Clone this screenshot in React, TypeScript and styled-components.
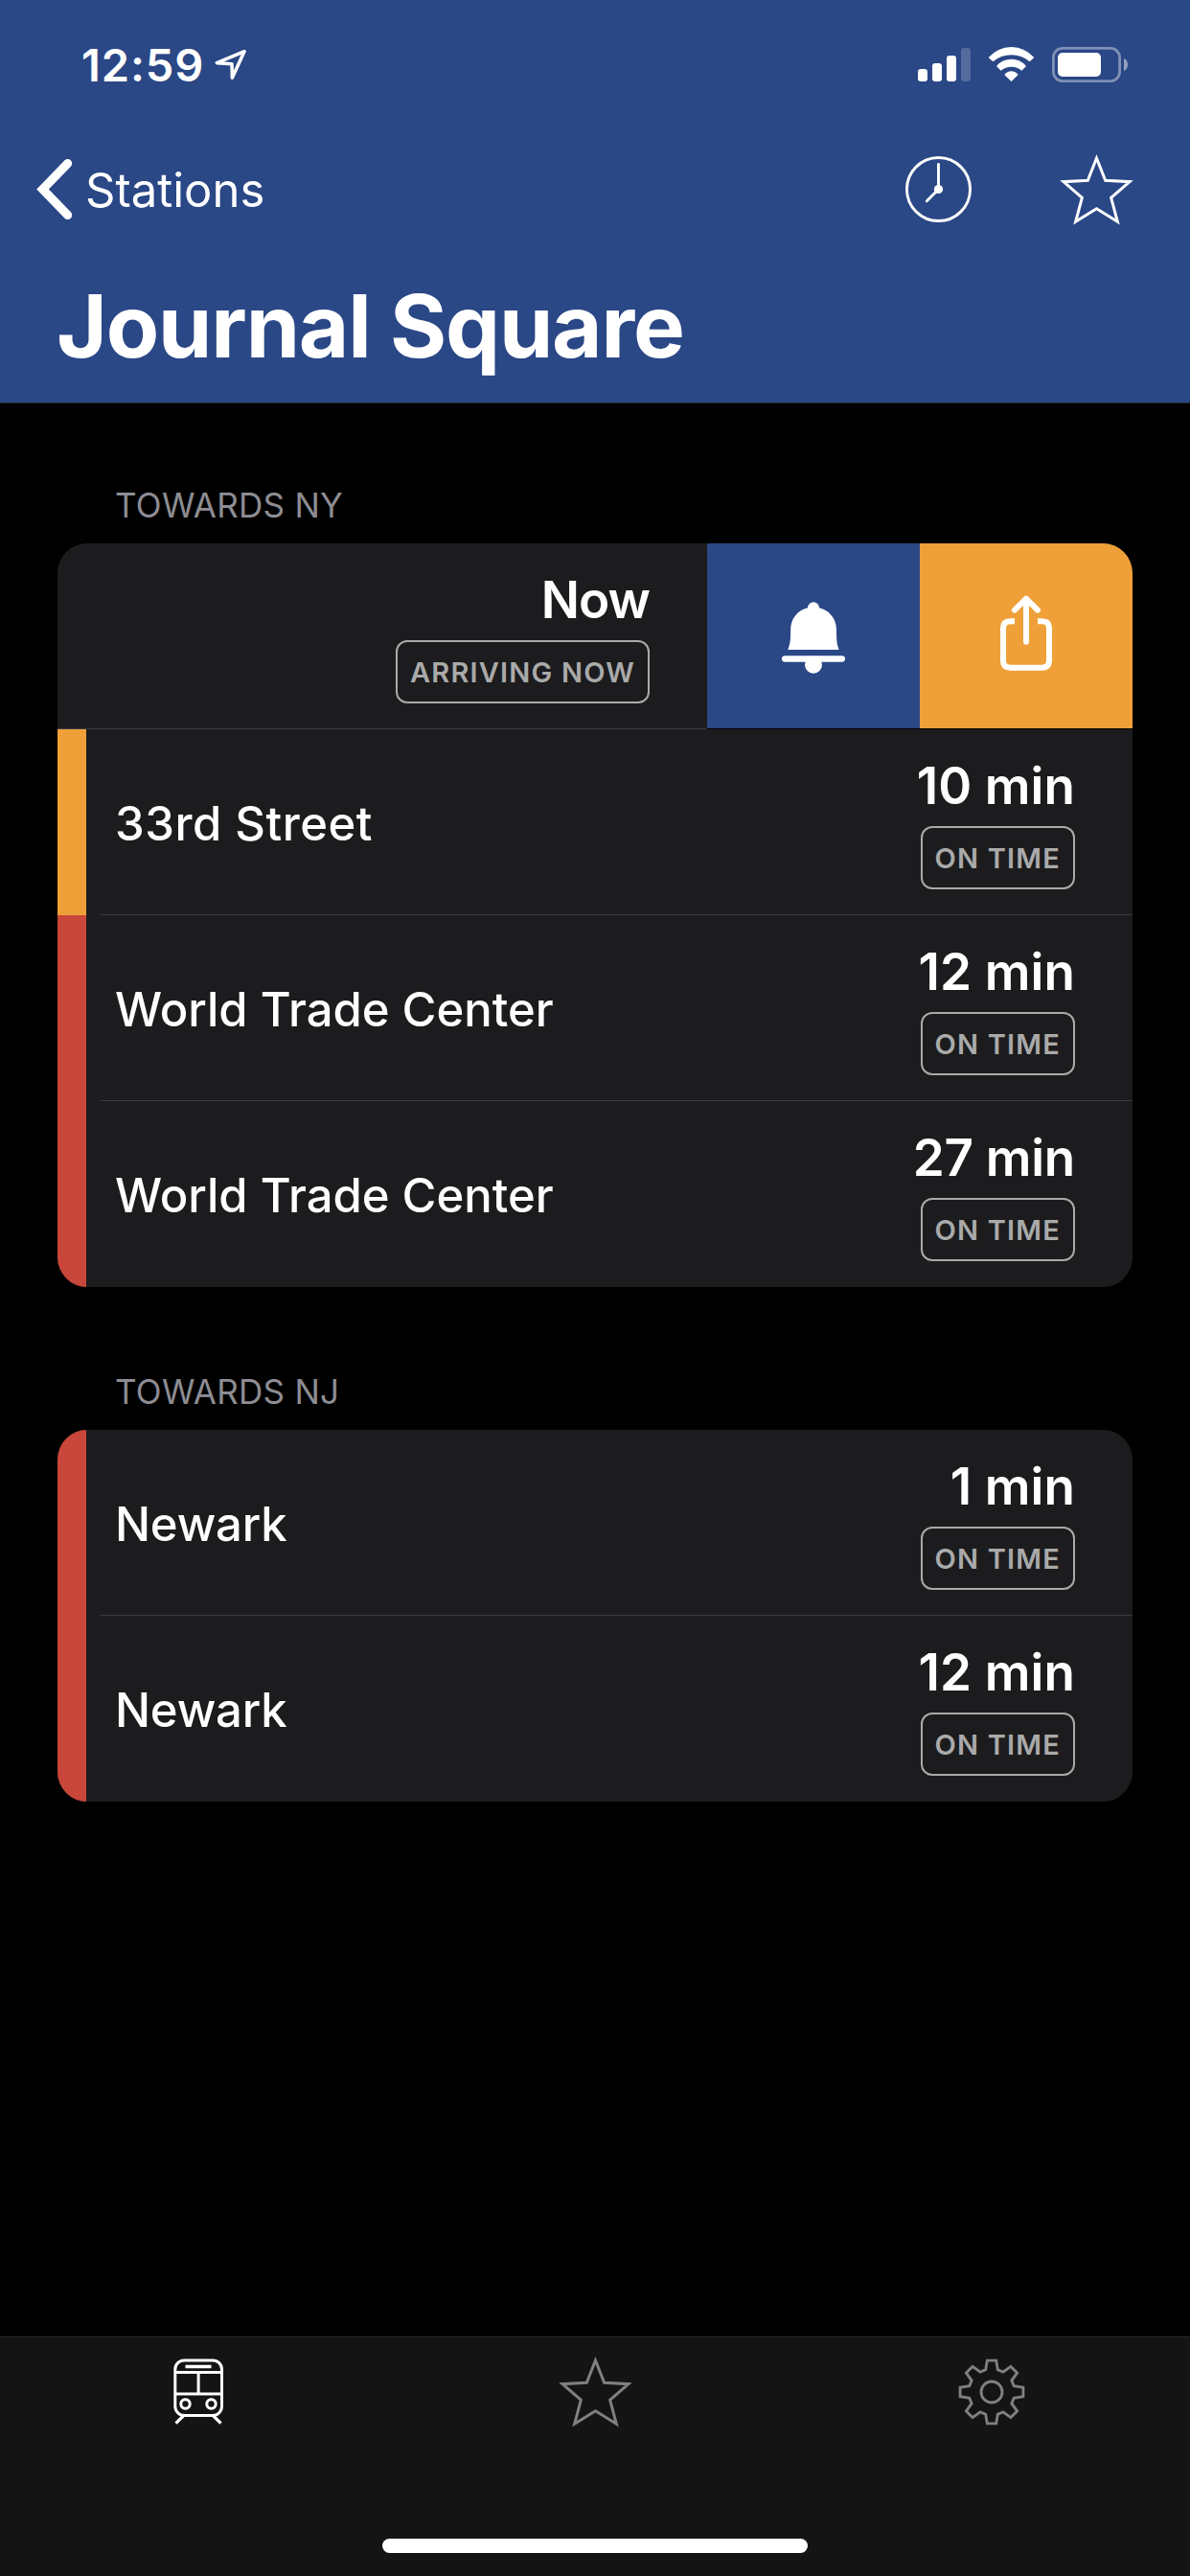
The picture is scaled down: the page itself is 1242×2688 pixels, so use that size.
import React from 'react';
import styled, { createGlobalStyle } from 'styled-components';

const color = {
  blue: '#2a4786',
  orange: '#f0a038',
  red: '#c8473a',
  card: '#1c1c1e',
  divider: '#3c3c3e',
  label: '#8d8d93',
  badge: '#aaaaaa',
  idle: '#808080',
};

const GlobalStyle = createGlobalStyle`
  * { box-sizing: border-box; }
  html, body { margin: 0; background: #000; }
  svg { display: block; flex: none; overflow: visible; }
`;

const Screen = styled.div`
  display: flex;
  flex-direction: column;
  width: 1242px;
  height: 2688px;
  background: #000;
  color: #fff;
  font-family: Inter, "Liberation Sans", sans-serif;
  overflow: hidden;
`;

const Header = styled.header`
  height: 421px;
  background: ${color.blue};
  border-bottom: 1px solid #262628;
`;

const StatusBar = styled.div`
  display: flex;
  align-items: flex-start;
  height: 132px;
  padding: 38px 65px 0 85px;
`;

const Clock = styled.span`
  font-size: 47px;
  font-weight: 600;
  line-height: 60px;
  letter-spacing: 0.9px;
  margin-right: 11px;
`;

const LocationSlot = styled.span`
  margin-top: 13px;
`;

const StatusIcons = styled.div`
  display: flex;
  gap: 18px;
  margin: 11px 0 0 auto;
`;

const NavBar = styled.nav`
  display: flex;
  align-items: center;
  height: 132px;
  padding: 0 60px 0 38px;
`;

const BackButton = styled.button`
  display: flex;
  align-items: center;
  gap: 13px;
  padding: 0;
  border: 0;
  background: none;
  color: inherit;
  font: 400 49px/61px Inter, "Liberation Sans", sans-serif;
`;

const NavActions = styled.div`
  display: flex;
  align-items: center;
  gap: 93px;
  margin: -1px 0 0 auto;
`;

const Title = styled.h1`
  margin: 0;
  padding: 21px 0 0 59px;
  font-size: 90.5px;
  font-weight: 700;
  line-height: 110px;
  letter-spacing: -1.15px;
`;

const Main = styled.main`
  flex: 1;
  padding: 84px 60px 0;
`;

const Section = styled.section`
  & + & { margin-top: 87px; }
`;

const SectionLabel = styled.h2`
  margin: 0 0 18px;
  padding-left: 60px;
  color: ${color.label};
  font-size: 35px;
  font-weight: 400;
  line-height: 44px;
  letter-spacing: 0.3px;
`;

const Card = styled.div`
  border-radius: 31px;
  background: ${color.card};
  overflow: hidden;
`;

const Row = styled.div`
  display: flex;
  height: 194px;
`;

const LineBar = styled.span<{ $line: string }>`
  width: 30px;
  background: ${(p) => p.$line};
`;

const RowBody = styled.div<{ $last: boolean }>`
  display: flex;
  flex: 1;
  justify-content: space-between;
  margin-left: 15px;
  padding: 0 60px 0 15px;
  border-bottom: 1px solid ${(p) => (p.$last ? 'transparent' : color.divider)};
`;

const Destination = styled.span<{ $tracking: number }>`
  align-self: center;
  padding-top: 5px;
  font-size: 49px;
  font-weight: 500;
  line-height: 60px;
  letter-spacing: ${(p) => p.$tracking}px;
`;

const Arrival = styled.div`
  display: flex;
  flex-direction: column;
  align-items: flex-end;
  gap: 12px;
  padding-top: 29px;
`;

const Minutes = styled.span<{ $tracking: number }>`
  font-size: 53px;
  font-weight: 600;
  line-height: 60px;
  letter-spacing: ${(p) => p.$tracking}px;
`;

const Badge = styled.span`
  height: 66px;
  padding: 0 13px;
  border: 2px solid ${color.badge};
  border-radius: 12px;
  color: ${color.badge};
  font-size: 29px;
  font-weight: 600;
  line-height: 63px;
  letter-spacing: 1.2px;
  white-space: nowrap;
`;

const SwipedBody = styled.div`
  display: flex;
  flex: 1;
  justify-content: flex-end;
  padding-right: 60px;
  border-bottom: 1px solid ${color.divider};
`;

const SwipeActions = styled.div`
  display: flex;
  border-bottom: 1px solid #000;
`;

const SwipeButton = styled.button<{ $fill: string }>`
  display: flex;
  justify-content: center;
  width: 222px;
  height: 193px;
  padding: 0;
  border: 0;
  background: ${(p) => p.$fill};
`;

const TabBar = styled.footer`
  height: 250px;
  border-top: 1px solid #2a2a2a;
  background: #141414;
`;

const Tabs = styled.div`
  display: grid;
  grid-template-columns: repeat(3, 1fr);
  height: 113px;
`;

const Tab = styled.button<{ $active?: boolean }>`
  display: flex;
  align-items: center;
  justify-content: center;
  padding: 0;
  border: 0;
  background: none;
  color: ${(p) => (p.$active ? '#fff' : color.idle)};
`;

const HomeIndicator = styled.div`
  width: 444px;
  height: 15px;
  margin: 97px auto 0;
  border-radius: 8px;
  background: #fff;
`;

const LocationIcon = () => (
  <svg width="34" height="34" viewBox="673 153 102 102" fill="none" stroke="#fff" strokeWidth="10.5" strokeLinejoin="round">
    <path d="M766 161L680 197L727 200L728 244Z" />
  </svg>
);

const SignalIcon = () => (
  <svg width="55" height="38" viewBox="958 49 55 38" fill="#fff">
    <rect x="958" y="72" width="10" height="13" rx="3" />
    <rect x="973" y="66" width="10" height="19" rx="3" />
    <rect x="988" y="58" width="10" height="27" rx="3" />
    <rect x="1003" y="50" width="10" height="35" rx="3" opacity="0.2" />
  </svg>
);

const WifiIcon = () => (
  <svg width="49" height="38" viewBox="453 147 147 114" fill="#fff">
    <path d="M455 180A94 94 0 0 1 598 180L584 193A88 88 0 0 0 469 193Z" />
    <path d="M480 207A60 60 0 0 1 573 207L559 221A50 50 0 0 0 494 221Z" />
    <path d="M505 234A26 26 0 0 1 548 234L526.5 255Z" />
  </svg>
);

const BatteryIcon = () => (
  <svg width="79" height="38" viewBox="1098 49 79 38">
    <rect x="1099.4" y="50.4" width="69.2" height="34.2" rx="9.5" fill="none" stroke="#fff" strokeOpacity="0.4" strokeWidth="2.8" />
    <rect x="1104" y="55" width="45" height="25" rx="5" fill="#fff" />
    <path d="M1173 61C1178.300 63 1178.300 72 1173 74Z" fill="#fff" fillOpacity="0.5" />
  </svg>
);

const BackIcon = () => (
  <svg width="38" height="64" viewBox="38 167 38 64" fill="none" stroke="#fff" strokeWidth="9" strokeLinecap="round">
    <path d="M70.700 171.500L44.500 198.500L70.700 225.500" />
  </svg>
);

const ClockIcon = () => (
  <svg width="69" height="69" viewBox="0 0 69 69" fill="none" stroke="#fff" strokeWidth="2.9" strokeLinecap="round">
    <circle cx="34.5" cy="34.5" r="33.050" />
    <path d="M34.500 34.500V8.500M34.500 34.500L22.300 46.800" />
    <circle cx="34.5" cy="34.5" r="4.6" fill="#fff" stroke="none" />
  </svg>
);

const StarIcon = () => (
  <svg width="75" height="72" viewBox="99 118 225 216" fill="none" stroke="currentColor" strokeWidth="9">
    <path d="M211.500 127L239 197L315 201L257 251L277 326L211.500 285L146 326L166 251L108 201L184 197Z" />
  </svg>
);

const BellIcon = () => (
  <svg width="66" height="193" viewBox="48 -114 198 579" fill="#fff">
    <path d="M129 88A18 18 0 0 1 165 88C197 96 219 122 219 157C219 189 220 200 227 219H67C74 200 75.500 189 75.500 157C75.500 122 97 96 129 88Z" />
    <rect x="48" y="238" width="198" height="19" rx="9.500" />
    <circle cx="147" cy="266" r="27" />
  </svg>
);

const ShareIcon = () => (
  <svg width="54" height="193" viewBox="732 -114 162 579" fill="none" stroke="#fff" strokeWidth="18">
    <path d="M777 130H763Q741 130 741 152V253Q741 275 763 275H863Q885 275 885 253V152Q885 130 863 130H849" />
    <path d="M777 95L813 59L849 95M813 62V194" strokeLinecap="round" strokeLinejoin="round" />
  </svg>
);

const TrainIcon = () => (
  <svg width="52" height="69" viewBox="40.500 41.500 52 69" fill="none" stroke="currentColor" strokeWidth="3">
    <rect x="42.300" y="43.400" width="48.700" height="57.600" rx="9.500" />
    <path d="M53 50H80" strokeWidth="3.500" />
    <path d="M42.300 56H91M42.300 78.500H91M66.600 56V78.500" />
    <circle cx="53" cy="89" r="4.700" />
    <circle cx="80" cy="89" r="4.700" />
    <path d="M50.800 101.500L43 109.200M82.200 101.500L90 109.200" strokeWidth="3.200" />
  </svg>
);

// One tooth, pointing up, repeated every 45 degrees round the hub.
const tooth: [number, number][] = [[-6.3, -23.2], [-4.700, -32.900], [4.700, -32.900], [6.3, -23.2]];
const gearPoints = Array.from({ length: 8 }, (_, i) => {
  const a = (i * Math.PI) / 4;
  return tooth
    .map(([x, y]) => `${(x * Math.cos(a) - y * Math.sin(a)).toFixed(2)},${(x * Math.sin(a) + y * Math.cos(a)).toFixed(2)}`)
    .join(' ');
}).join(' ');

const GearIcon = () => (
  <svg width="70" height="70" viewBox="-35 -35 70 70" fill="none" stroke="currentColor" strokeWidth="2.9">
    <polygon points={gearPoints} />
    <circle r="11" />
  </svg>
);

type Train = { to: string; time: string; line: string; tracking?: number; timeTracking?: number };

const toNJ: Train[] = [
  { to: 'Newark', time: '1 min', line: color.red, tracking: -0.2 },
  { to: 'Newark', time: '12 min', line: color.red, tracking: -0.2 },
];

const toNY: Train[] = [
  { to: '33rd Street', time: '10 min', line: color.orange, tracking: 0.5 },
  { to: 'World Trade Center', time: '12 min', line: color.red },
  { to: 'World Trade Center', time: '27 min', line: color.red, timeTracking: -0.3 },
];

const ArrivalInfo = ({ time, status, tracking = 0.1 }: { time: string; status: string; tracking?: number }) => (
  <Arrival>
    <Minutes $tracking={tracking}>{time}</Minutes>
    <Badge>{status}</Badge>
  </Arrival>
);

const TrainRows = ({ trains }: { trains: Train[] }) => (
  <>
    {trains.map((t, i) => (
      <Row key={i}>
        <LineBar $line={t.line} />
        <RowBody $last={i === trains.length - 1}>
          <Destination $tracking={t.tracking ?? 0}>{t.to}</Destination>
          <ArrivalInfo time={t.time} status="ON TIME" tracking={t.timeTracking} />
        </RowBody>
      </Row>
    ))}
  </>
);

export default function App() {
  return (
    <Screen>
      <GlobalStyle />
      <Header>
        <StatusBar>
          <Clock>12:59</Clock>
          <LocationSlot><LocationIcon /></LocationSlot>
          <StatusIcons>
            <SignalIcon />
            <WifiIcon />
            <BatteryIcon />
          </StatusIcons>
        </StatusBar>
        <NavBar>
          <BackButton>
            <BackIcon />
            Stations
          </BackButton>
          <NavActions>
            <ClockIcon />
            <StarIcon />
          </NavActions>
        </NavBar>
        <Title>Journal Square</Title>
      </Header>
      <Main>
        <Section>
          <SectionLabel>TOWARDS NY</SectionLabel>
          <Card>
            <Row>
              <SwipedBody>
                <ArrivalInfo time="Now" status="ARRIVING NOW" tracking={-1} />
              </SwipedBody>
              <SwipeActions>
                <SwipeButton $fill={color.blue}><BellIcon /></SwipeButton>
                <SwipeButton $fill={color.orange}><ShareIcon /></SwipeButton>
              </SwipeActions>
            </Row>
            <TrainRows trains={toNY} />
          </Card>
        </Section>
        <Section>
          <SectionLabel>TOWARDS NJ</SectionLabel>
          <Card>
            <TrainRows trains={toNJ} />
          </Card>
        </Section>
      </Main>
      <TabBar>
        <Tabs>
          <Tab $active><TrainIcon /></Tab>
          <Tab><StarIcon /></Tab>
          <Tab><GearIcon /></Tab>
        </Tabs>
        <HomeIndicator />
      </TabBar>
    </Screen>
  );
}
